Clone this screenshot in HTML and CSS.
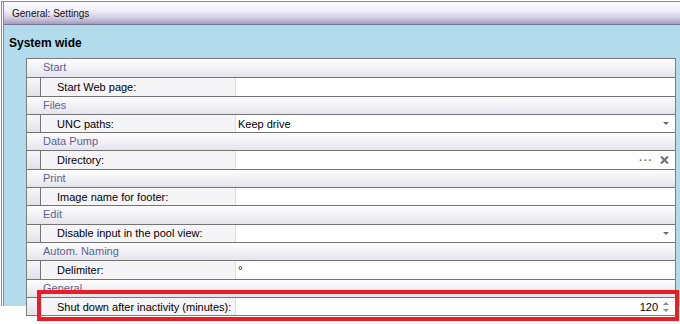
FILE: index.html
```html
<!DOCTYPE html>
<html lang="en">
<head>
  <meta charset="UTF-8" />
  <title>General: Settings</title>
  <link rel="stylesheet" href="styles.css">
</head>
<body>

<div class="window">
  <div class="titlebar">General: Settings</div>
  <div class="pane">
    <div class="pane-title">System wide</div>

    <div class="grid">
      <div class="cat">Start</div>
      <div class="prop">
        <span class="gutter"></span>
        <span class="label">Start Web page:</span>
        <span class="value"></span>
      </div>

      <div class="cat">Files</div>
      <div class="prop">
        <span class="gutter"></span>
        <span class="label">UNC paths:</span>
        <span class="value">Keep drive <span class="drop"></span></span>
      </div>

      <div class="cat">Data Pump</div>
      <div class="prop">
        <span class="gutter"></span>
        <span class="label">Directory:</span>
        <span class="value">
          <span class="dots">···</span>
          <svg class="clear" width="9" height="8" viewBox="0 0 9 8">
            <path d="M1 0.5 L8 7.5 M8 0.5 L1 7.5" stroke="#6c6c6c" stroke-width="2" fill="none"/>
          </svg>
        </span>
      </div>

      <div class="cat">Print</div>
      <div class="prop">
        <span class="gutter"></span>
        <span class="label">Image name for footer:</span>
        <span class="value"></span>
      </div>

      <div class="cat">Edit</div>
      <div class="prop">
        <span class="gutter"></span>
        <span class="label">Disable input in the pool view:</span>
        <span class="value"><span class="drop"></span></span>
      </div>

      <div class="cat">Autom. Naming</div>
      <div class="prop">
        <span class="gutter"></span>
        <span class="label">Delimiter:</span>
        <span class="value">°</span>
      </div>

      <div class="cat">General</div>
      <div class="prop">
        <span class="gutter"></span>
        <span class="label">Shut down after inactivity (minutes):</span>
        <span class="value num">120 <span class="spin"><i class="up"></i><i class="down"></i></span></span>
      </div>
    </div>
  </div>
</div>

<!-- red annotation box over the last row -->
<div class="highlight"></div>

</body>
</html>
```

FILE: styles.css
```css
body {
  margin: 0;
  background: #fff;
  font-family: 'Liberation Sans', Arial, sans-serif;
  font-size: 11px;
  color: #000;
  position: relative;
  height: 324px;
  overflow: hidden;
}
.window {
  margin: 1px 0 0 1px;
  border-top: 1px solid #8a8a8a;
  border-left: 3px double #8a8a8a;
}
.titlebar {
  height: 22px;
  line-height: 23px;
  padding-left: 8px;
  font-size: 10px;
  color: #111;
  background: linear-gradient(#fdfcff 0%, #f1eff9 40%, #cdc8df 75%, #a29cbd 100%);
  border-bottom: 1px solid #7a7494;
}
.pane {
  background: #b2dcec;
  padding: 9px 4px 1px 22px;
  height: 281px;
  box-sizing: border-box;
}
.pane-title {
  font-weight: bold;
  font-size: 12px;
  height: 18px;
  line-height: 18px;
  margin: 0 0 6px -17px;
}
.grid {
  border: 1px solid #7d7d7d;
  border-top: 1px solid #7d7d7d;
  background: #fff;
}
.cat, .prop {
  height: 18.3px;
  box-sizing: border-box;
  border-top: 1px solid #747474;
}
.cat:first-child { border-top: none; }
.cat {
  line-height: 17px;
  padding-left: 16px;
  color: #5f5f8f;
  background: linear-gradient(#fefeff, #e4e4ec);
}
.prop {
  display: flex;
}
.gutter {
  width: 13px;
  background: linear-gradient(#f6f6fa, #e2e2ea);
  border-right: 1px solid #747474;
}
.label {
  width: 178px;
  padding-left: 16px;
  background: #f5f5f7;
  border-right: 1px solid #dcdce4;
  display: flex;
  align-items: center;
}
.value {
  flex: 1;
  display: flex;
  align-items: center;
  padding: 0 6px 0 2px;
  background: #fff;
}
.drop {
  margin-left: auto;
  width: 0;
  height: 0;
  border-left: 3px solid transparent;
  border-right: 3px solid transparent;
  border-top: 3px solid #6c6c6c;
}
.dots {
  margin-left: auto;
  color: #6c6c6c;
  font-weight: bold;
  letter-spacing: 1px;
  margin-right: 7px;
}
.clear { display: block; }
.num { justify-content: flex-end; }
.spin {
  display: flex;
  flex-direction: column;
  gap: 4px;
  margin-left: 5px;
}
.spin i {
  width: 0;
  height: 0;
  border-left: 3px solid transparent;
  border-right: 3px solid transparent;
}
.spin .up { border-bottom: 3px solid #8a8a8a; }
.spin .down { border-top: 3px solid #8a8a8a; }
.highlight {
  position: absolute;
  left: 37px;
  top: 290px;
  width: 642px;
  height: 31px;
  box-sizing: border-box;
  border: 4px solid #ed1c24;
}
```
